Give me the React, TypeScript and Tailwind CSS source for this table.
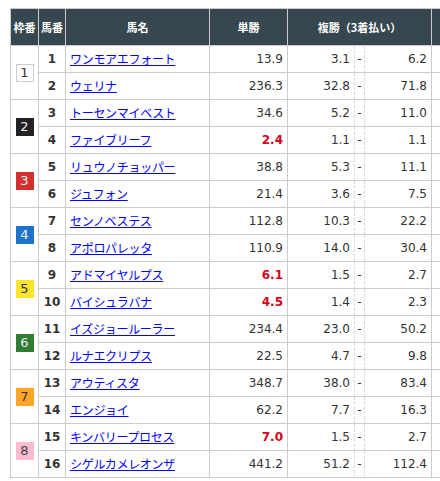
import React from "react";

type Row = [number, number, string, string, boolean, string, string];

const rows: Row[] = [
  [1, 1, "ワンモアエフォート", "13.9", false, "3.1", "6.2"],
  [1, 2, "ウェリナ", "236.3", false, "32.8", "71.8"],
  [2, 3, "トーセンマイベスト", "34.6", false, "5.2", "11.0"],
  [2, 4, "ファイブリーフ", "2.4", true, "1.1", "1.1"],
  [3, 5, "リュウノチョッパー", "38.8", false, "5.3", "11.1"],
  [3, 6, "ジュフォン", "21.4", false, "3.6", "7.5"],
  [4, 7, "センノベステス", "112.8", false, "10.3", "22.2"],
  [4, 8, "アポロパレッタ", "110.9", false, "14.0", "30.4"],
  [5, 9, "アドマイヤルプス", "6.1", true, "1.5", "2.7"],
  [5, 10, "バイシュラバナ", "4.5", true, "1.4", "2.3"],
  [6, 11, "イズジョールーラー", "234.4", false, "23.0", "50.2"],
  [6, 12, "ルナエクリプス", "22.5", false, "4.7", "9.8"],
  [7, 13, "アウティスタ", "348.7", false, "38.0", "83.4"],
  [7, 14, "エンジョイ", "62.2", false, "7.7", "16.3"],
  [8, 15, "キンバリープロセス", "7.0", true, "1.5", "2.7"],
  [8, 16, "シゲルカメレオンザ", "441.2", false, "51.2", "112.4"],
];

const wakuStyle: Record<number, string> = {
  1: "bg-white border border-[#cccccc] text-[#333333]",
  2: "bg-[#222222] text-[#eeeeee]",
  3: "bg-[#d32f2f] text-[#f5f5f5]",
  4: "bg-[#1e74cc] text-[#f5f5f5]",
  5: "bg-[#fde52c] text-[#333333]",
  6: "bg-[#2e7d32] text-[#f0f0f0]",
  7: "bg-[#ffa626] text-[#333333]",
  8: "bg-[#f8bbd0] text-[#444444]",
};

const num = "[font-family:'DejaVu_Sans',Verdana,sans-serif]";
const jp = "[font-family:'Noto_Sans_CJK_JP',sans-serif]";
const cell = "border-r border-b border-[#cccccc] flex items-center";
const hcell =
  "border-r border-b border-[#cccccc] bg-[#37474f] text-white font-bold text-[11px] flex items-center justify-center " +
  jp;

export default function App() {
  return (
    <div className="w-[440px] h-[481px] overflow-hidden bg-white">
      <div className="pl-[10px] pt-[8px]">
        <div className="grid w-[500px] grid-cols-[28px_27px_144px_78px_67px_10px_67px_79px] grid-rows-[37px_repeat(16,27px)] border-l border-t border-[#cccccc] text-[12px] text-[#333333]">
          <div className={hcell}>枠番</div>
          <div className={hcell}>馬番</div>
          <div className={hcell}>馬名</div>
          <div className={hcell}>単勝</div>
          <div className={hcell + " col-span-3"}>複勝（3着払い）</div>
          <div className={hcell}></div>
          {rows.map((r, i) => (
            <React.Fragment key={r[1]}>
              {i % 2 === 0 && (
                <div className={cell + " row-span-2 justify-center"}>
                  <div
                    className={
                      "w-[18px] h-[18px] flex items-center justify-center text-[13px] leading-none " +
                      num +
                      " " +
                      wakuStyle[r[0]]
                    }
                  >
                    {r[0]}
                  </div>
                </div>
              )}
              <div className={cell + " justify-center font-bold " + num}>{r[1]}</div>
              <div className={cell + " pl-[4px]"}>
                <a
                  href="#"
                  className={"text-[#0000ff] underline tracking-[-0.3px] " + jp}
                >
                  {r[2]}
                </a>
              </div>
              <div
                className={
                  cell +
                  " justify-end pr-[4px] " +
                  num +
                  (r[4] ? " text-[#d6001c] font-bold" : "")
                }
              >
                {r[3]}
              </div>
              <div
                className={
                  cell +
                  " justify-end pr-[4px] [border-right-style:dashed] border-r-[#d8d8d8] " +
                  num
                }
              >
                {r[5]}
              </div>
              <div
                className={
                  cell +
                  " justify-center [border-right-style:dashed] border-r-[#d8d8d8] " +
                  num
                }
              >
                -
              </div>
              <div className={cell + " justify-end pr-[4px] " + num}>{r[6]}</div>
              <div className={cell}></div>
            </React.Fragment>
          ))}
        </div>
      </div>
    </div>
  );
}
